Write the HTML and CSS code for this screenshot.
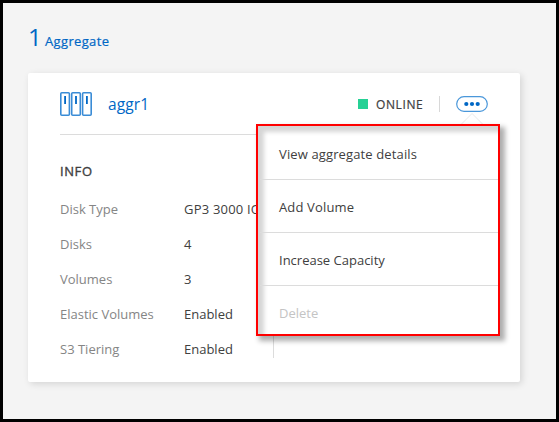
FILE: index.html
```html
<!DOCTYPE html>
<html lang="en">
<head>
<meta charset="utf-8">
<title>Aggregates</title>
<link rel="stylesheet" href="styles.css">
</head>
<body>
<main class="page">
  <h1 class="title"><span class="count">1</span><span class="label">Aggregate</span></h1>
  <section class="card">
    <header class="head">
      <svg class="disks" width="32" height="24" viewBox="0 0 32 24" fill="none">
        <g stroke="#3a8cd6" stroke-width="1.6">
          <rect x=".8" y=".8" width="8.6" height="22.4" rx="1"/>
          <rect x="11.7" y=".8" width="8.6" height="22.4" rx="1"/>
          <rect x="22.6" y=".8" width="8.6" height="22.4" rx="1"/>
        </g>
        <path d="M5.1 4v8M16 4v8M26.9 4v8" stroke="#0067c5" stroke-width="1.8"/>
      </svg>
      <span class="name">aggr1</span>
      <span class="dot"></span>
      <span class="status">ONLINE</span>
      <div class="action">
        <svg class="more" width="32" height="16" viewBox="0 0 32 16">
          <rect x=".7" y=".7" width="30.6" height="14.6" rx="7.3" fill="#fff" stroke="#4a97da" stroke-width="1.2"/>
          <g fill="#0067c5"><circle cx="10.3" cy="8" r="2.1"/><circle cx="16" cy="8" r="2.1"/><circle cx="21.7" cy="8" r="2.1"/></g>
        </svg>
        <svg class="pointer" width="26" height="14" viewBox="0 0 26 14"><path d="M1 13.5L13 1.5L25 13.5" fill="#fff" stroke="#e8e8e8"/></svg>
        <ul class="menu">
          <li class="details">View aggregate details</li>
          <li class="add">Add Volume</li>
          <li>Increase Capacity</li>
          <li class="disabled">Delete</li>
        </ul>
      </div>
    </header>
    <div class="body">
      <div class="info">
        <h2>INFO</h2>
        <dl>
          <dt>Disk Type</dt><dd class="type">GP3 3000 IOPS</dd>
          <dt>Disks</dt><dd>4</dd>
          <dt>Volumes</dt><dd>3</dd>
          <dt>Elastic Volumes</dt><dd>Enabled</dd>
          <dt>S3 Tiering</dt><dd>Enabled</dd>
        </dl>
      </div>
    </div>
  </section>
</main>
</body>
</html>
```
FILE: styles.css
```css
* { box-sizing: border-box; margin: 0; padding: 0; }
body { font: 13px/20px "Open Sans", "Noto Sans", sans-serif; color: #404040; }
.page { width: 559px; height: 422px; border: 3px solid #000; background: #f4f4f4; padding: 19px 25px 0; overflow: hidden; }
.title { display: flex; align-items: baseline; height: 51px; color: #0067c5; font-weight: 400; line-height: 29px; }
.count { width: 17px; font-size: 24px; }
.label { font-size: 13px; letter-spacing: .35px; -webkit-text-stroke: .2px; }
.card { width: 492px; height: 309px; padding: 0 32px; background: #fff; border-radius: 2px; box-shadow: 2px 2px 7px rgba(0,0,0,.13); }
.head { display: flex; align-items: center; height: 62px; border-bottom: 1px solid #dcdcdc; }
.name { width: 250px; padding-left: 16px; color: #0067c5; font-size: 15.5px; letter-spacing: .1px; }
.dot { width: 10px; height: 10px; margin-left: 16px; background: #26d195; }
.status { width: 63px; padding: 2px 0 0 8px; font-size: 12px; letter-spacing: .6px; -webkit-text-stroke: .2px; }
.action { position: relative; display: flex; align-items: center; height: 16px; margin-left: auto; padding-left: 16px; border-left: 1px solid #d8d8d8; }
.more { display: block; }
.pointer { position: absolute; top: 16px; right: 3px; }
.menu { position: absolute; top: 28px; right: -12px; width: 244px; height: 212px; padding: 1px 0 0 2px; list-style: none; background: #fff; border: 2px solid #f00; box-shadow: inset 7px 7px 4px -1px #d6d6d6, inset 2px 2px 0 #f4f4f4, 4px 4px 5px 1px rgba(0,0,0,.32); }
.menu li { display: flex; align-items: center; height: 53px; padding: 3px 0 0 19px; border-bottom: 1px solid #dcdcdc; white-space: nowrap; }
.menu li:last-child { padding-top: 1px; border: 0; }
.menu .details { letter-spacing: .13px; }
.menu .add { letter-spacing: .15px; }
.menu .disabled { color: #c4c4c4; }
.body { display: flex; }
.info { width: 214px; height: 223px; border-right: 1px solid #dcdcdc; }
.info h2 { margin-top: 26px; font-size: 13px; font-weight: 400; letter-spacing: .6px; -webkit-text-stroke: .35px; }
.info dl { display: grid; grid-template-columns: 124px 1fr; grid-auto-rows: 35px; align-items: center; margin-top: 10px; }
.info dt { color: #858585; }
.info dd { white-space: nowrap; }
.info .type { letter-spacing: .2px; }
```
